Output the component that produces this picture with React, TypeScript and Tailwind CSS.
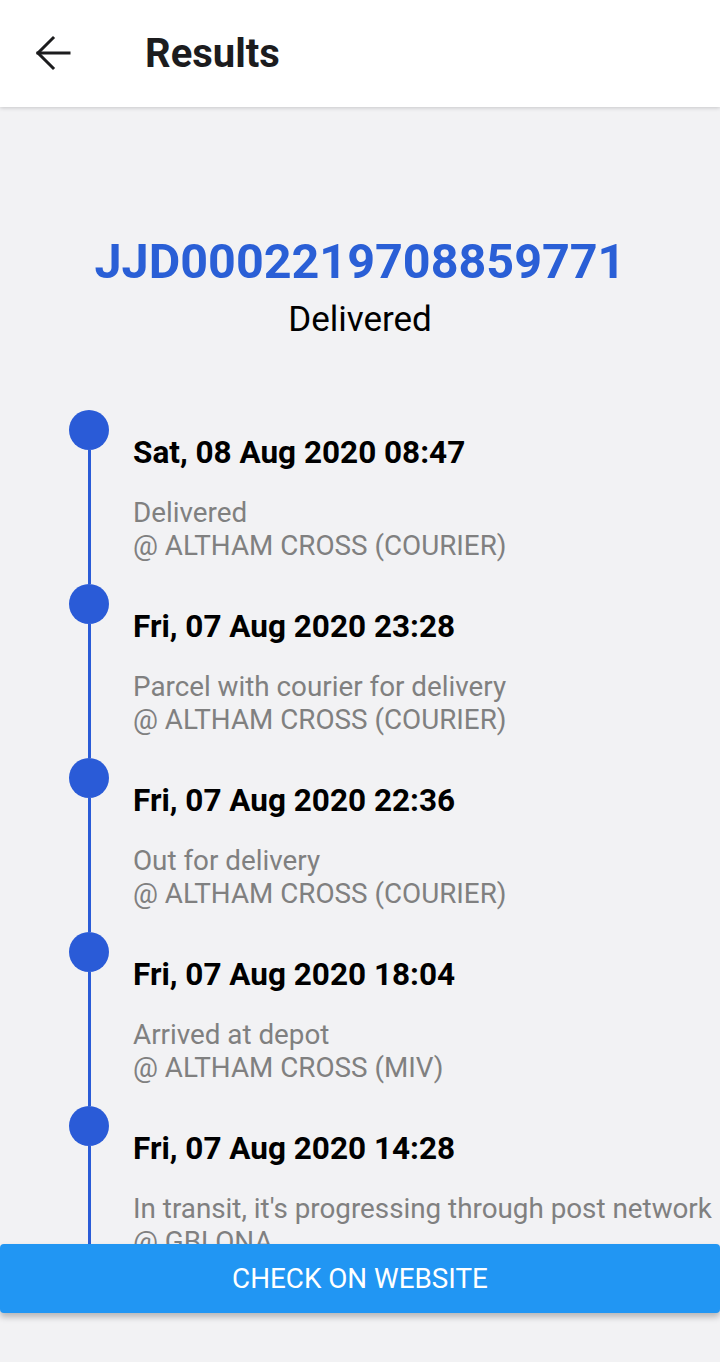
import React from "react";

const EVENTS = [
  { date: "Sat, 08 Aug 2020 08:47", status: "Delivered", place: "@ ALTHAM CROSS (COURIER)" },
  { date: "Fri, 07 Aug 2020 23:28", status: "Parcel with courier for delivery", place: "@ ALTHAM CROSS (COURIER)" },
  { date: "Fri, 07 Aug 2020 22:36", status: "Out for delivery", place: "@ ALTHAM CROSS (COURIER)" },
  { date: "Fri, 07 Aug 2020 18:04", status: "Arrived at depot", place: "@ ALTHAM CROSS (MIV)" },
  { date: "Fri, 07 Aug 2020 14:28", status: "In transit, it's progressing through post network", place: "@ GBLONA" },
];

function BackArrow() {
  return (
    <svg width="40" height="40" viewBox="0 0 40 40" fill="none" stroke="#1c1c1e" strokeWidth="3" strokeLinecap="square">
      <path d="M6 20h31" />
      <path d="M21 5 6 20l15 15" />
    </svg>
  );
}

export default function App() {
  return (
    <div className="h-[1362px] w-[720px] flex flex-col bg-[#f2f2f4] font-['Roboto',sans-serif] overflow-hidden">
      <header className="h-[107px] shrink-0 bg-white flex items-center shadow-[0_1px_4px_rgba(0,0,0,0.18)] relative z-10">
        <div className="ml-[32px] mt-[-2px]">
          <BackArrow />
        </div>
        <h1 className="ml-[73px] text-[40px] font-bold text-[#1c1c1e] leading-none">Results</h1>
      </header>

      <main className="flex-1 overflow-hidden">
        <div className="pt-[127px] flex flex-col items-center">
          <div className="text-[48.5px] leading-[56px] font-bold text-[#2a5fd6]">JJD0002219708859771</div>
          <div className="mt-[9px] text-[35px] leading-[42px] text-black">Delivered</div>
        </div>

        <ul className="mt-[69px] pl-[69px]">
          {EVENTS.map((e) => (
            <li key={e.date} className="flex h-[174px]">
              <div className="w-[40px] flex flex-col items-center shrink-0">
                <div className="w-[40px] h-[40px] rounded-full bg-[#2a5bd7]" />
                <div className="w-[3px] flex-1 bg-[#2a5bd7]" />
              </div>
              <div className="ml-[24px] pt-[24px]">
                <div className="text-[31.5px] leading-[38px] font-bold text-black">{e.date}</div>
                <div className="mt-[24px] text-[27.8px] leading-[33px] text-[#808080] whitespace-nowrap">
                  <div>{e.status}</div>
                  <div>{e.place}</div>
                </div>
              </div>
            </li>
          ))}
        </ul>
      </main>

      <div className="shrink-0 pb-[49px]">
        <button className="w-full h-[69px] rounded-[4px] bg-[#2196f3] text-white text-[27.8px] uppercase shadow-[0_4px_6px_rgba(0,0,0,0.25)]">
          Check on website
        </button>
      </div>
    </div>
  );
}
